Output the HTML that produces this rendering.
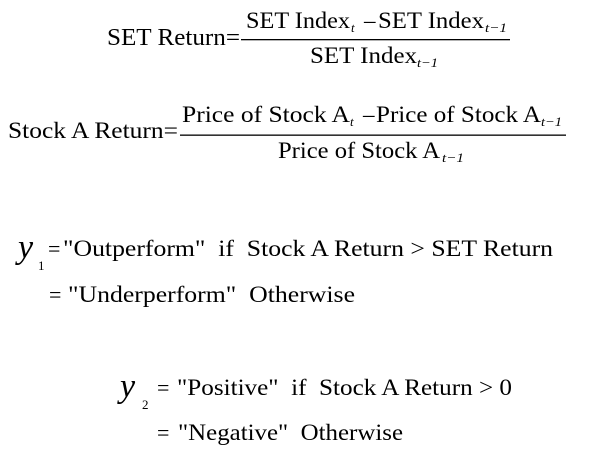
<!DOCTYPE html>
<html><head><meta charset="utf-8"><style>
html,body{margin:0;padding:0;background:#fff;width:596px;height:463px;overflow:hidden}
svg{display:block}
text{font-family:"Liberation Serif",serif;fill:#000;white-space:pre}
.i{font-style:italic}
</style></head><body>
<svg width="596" height="463" viewBox="0 0 596 463" xml:space="preserve">
<!-- Row 1 -->
<text x="107" y="45" font-size="24" textLength="133" lengthAdjust="spacingAndGlyphs">SET Return=</text>
<text x="246" y="28" font-size="23" textLength="104" lengthAdjust="spacingAndGlyphs">SET Index</text>
<text x="351" y="32" font-size="13" class="i">t</text>
<text x="364" y="28" font-size="23">–</text>
<text x="378" y="28" font-size="23" textLength="106" lengthAdjust="spacingAndGlyphs">SET Index</text>
<text x="485" y="32" font-size="13" class="i" textLength="22" lengthAdjust="spacingAndGlyphs">t−1</text>
<rect x="241" y="39" width="269" height="1.3"/>
<text x="310" y="63" font-size="23" textLength="107" lengthAdjust="spacingAndGlyphs">SET Index</text>
<text x="417" y="67" font-size="13" class="i" textLength="21" lengthAdjust="spacingAndGlyphs">t−1</text>
<!-- Row 2 -->
<text x="8" y="138" font-size="23" textLength="170" lengthAdjust="spacingAndGlyphs">Stock A Return=</text>
<text x="182" y="122" font-size="23" textLength="168" lengthAdjust="spacingAndGlyphs">Price of Stock A</text>
<text x="350" y="126" font-size="13" class="i">t</text>
<text x="363" y="122" font-size="23">–</text>
<text x="376" y="122" font-size="23" textLength="165" lengthAdjust="spacingAndGlyphs">Price of Stock A</text>
<text x="541" y="126" font-size="13" class="i" textLength="21" lengthAdjust="spacingAndGlyphs">t−1</text>
<rect x="180" y="134.5" width="386" height="1.3"/>
<text x="278" y="158" font-size="23" textLength="162" lengthAdjust="spacingAndGlyphs">Price of Stock A</text>
<text x="442" y="162" font-size="13" class="i" textLength="22" lengthAdjust="spacingAndGlyphs">t−1</text>
<!-- Row 3 -->
<text x="18" y="258" font-size="34" class="i">y</text>
<text x="38" y="270" font-size="13">1</text>
<text x="48" y="256" font-size="22">=</text>
<text x="63" y="256" font-size="23" textLength="490" lengthAdjust="spacingAndGlyphs">"Outperform"  if  Stock A Return &gt; SET Return</text>
<!-- Row 4 -->
<text x="49" y="302" font-size="22">=</text>
<text x="68" y="302" font-size="23" textLength="287" lengthAdjust="spacingAndGlyphs">"Underperform"  Otherwise</text>
<!-- Row 5 -->
<text x="120" y="397" font-size="34" class="i">y</text>
<text x="142" y="409" font-size="13">2</text>
<text x="157" y="395" font-size="22">=</text>
<text x="177" y="395" font-size="23" textLength="335" lengthAdjust="spacingAndGlyphs">"Positive"  if  Stock A Return &gt; 0</text>
<!-- Row 6 -->
<text x="157" y="440" font-size="22">=</text>
<text x="178" y="440" font-size="23" textLength="225" lengthAdjust="spacingAndGlyphs">"Negative"  Otherwise</text>
</svg>
</body></html>
